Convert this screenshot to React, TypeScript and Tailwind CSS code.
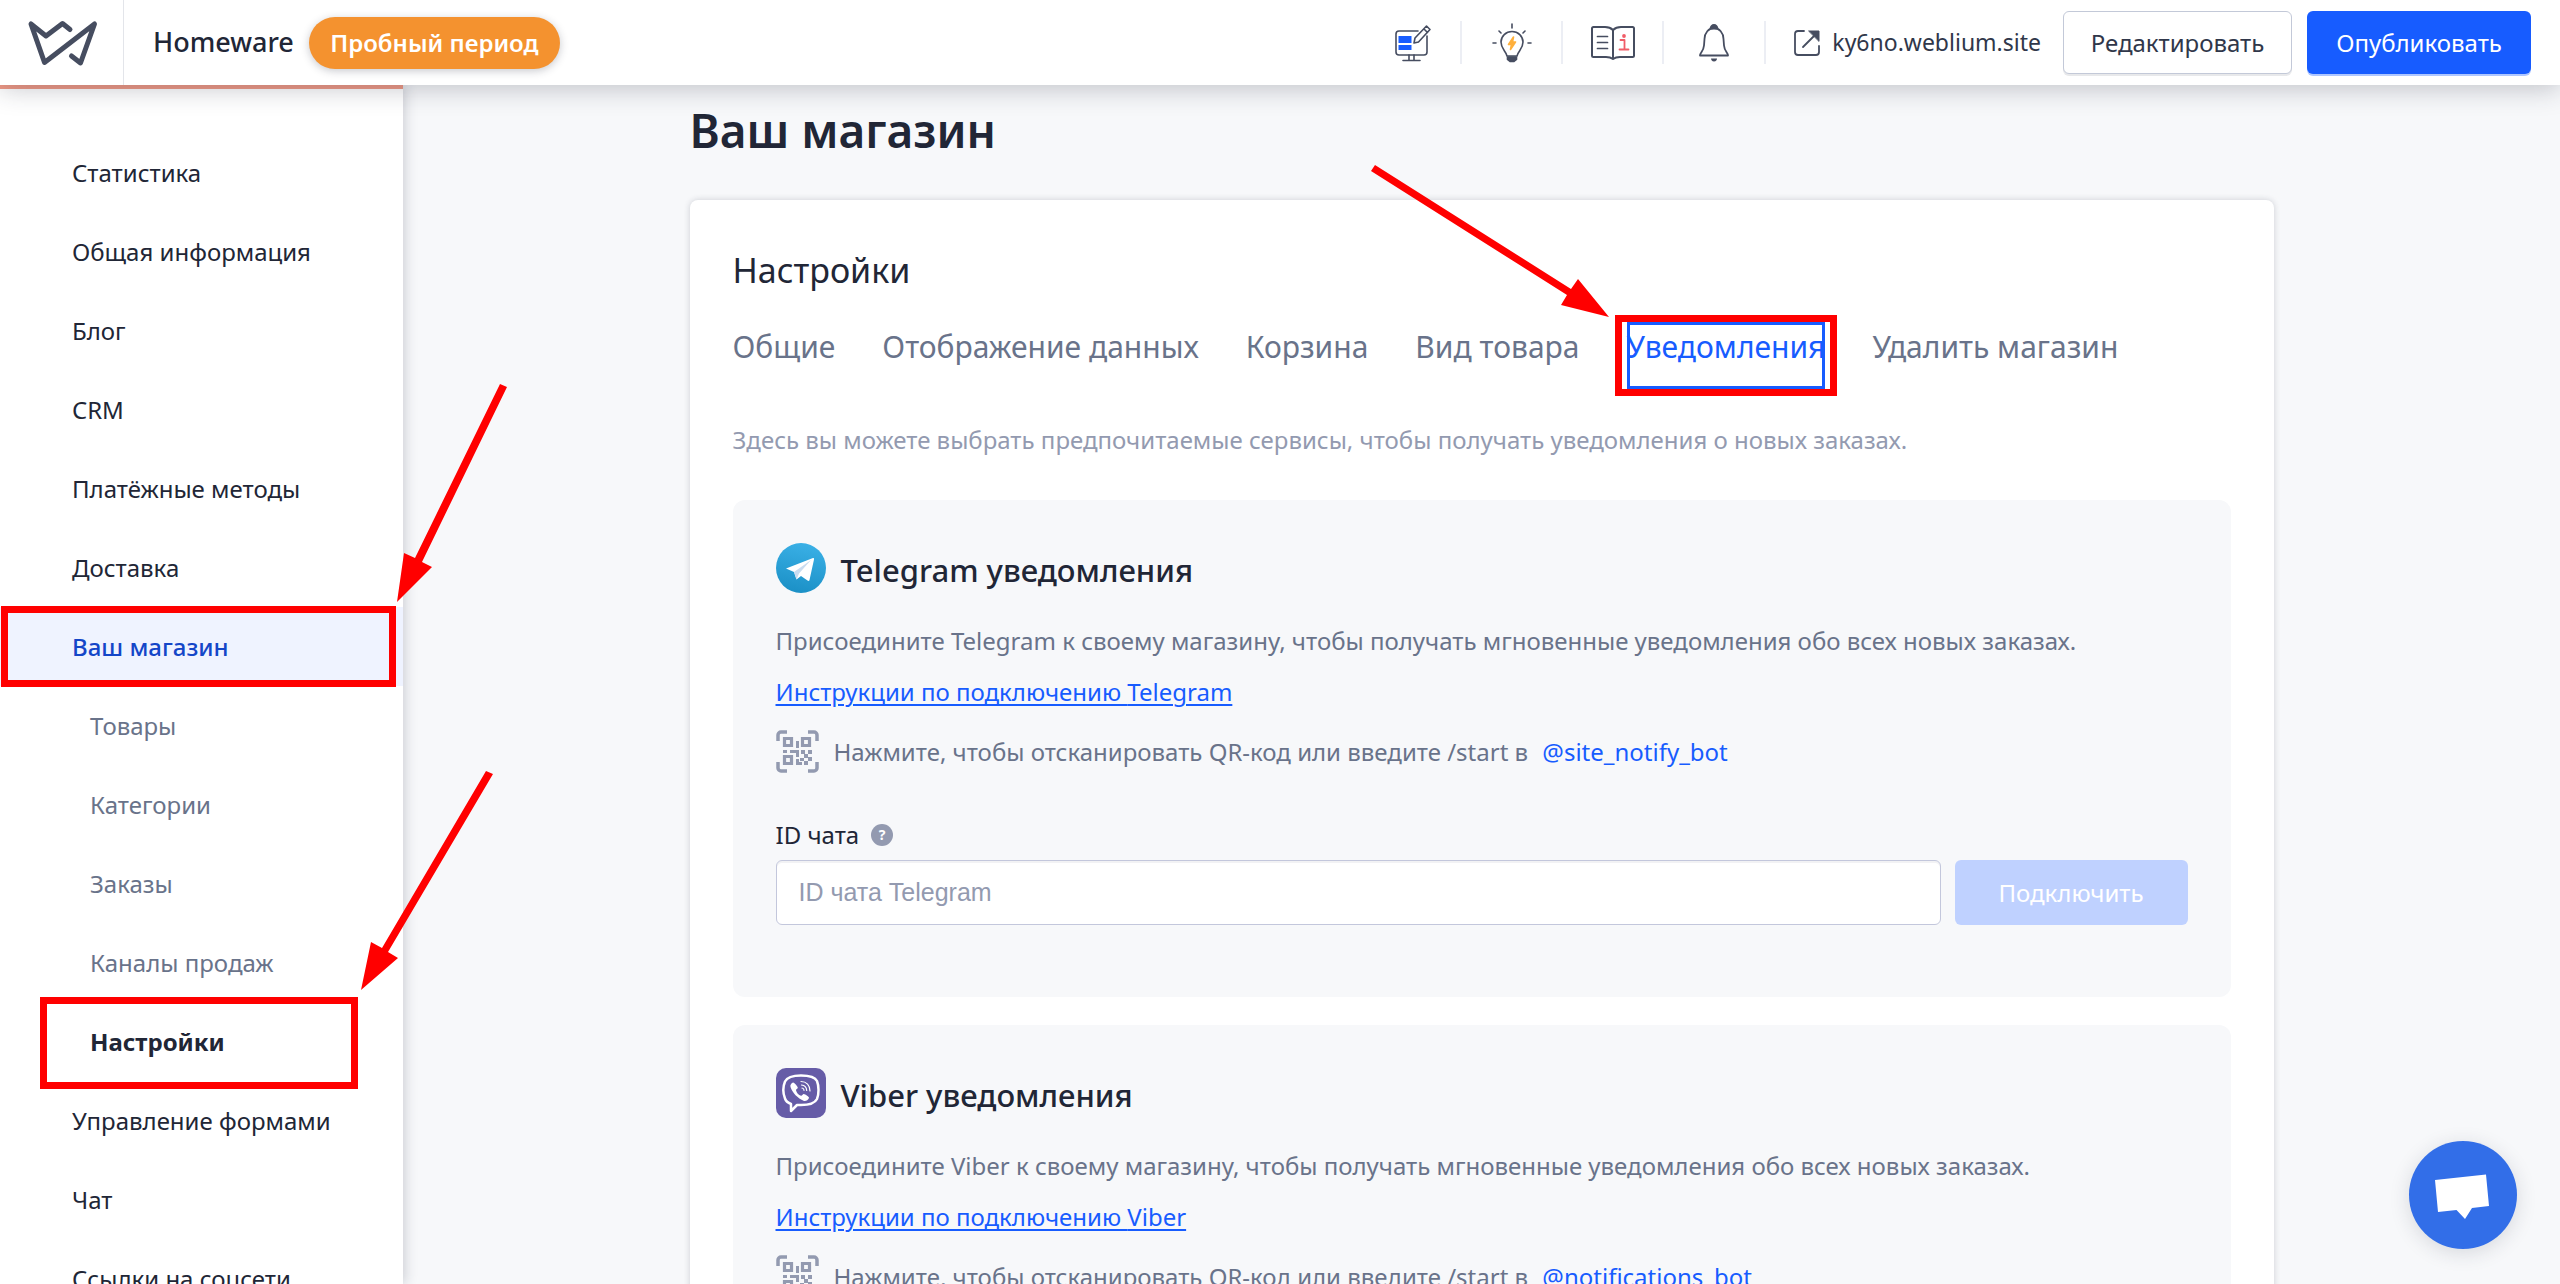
import type { ReactNode } from "react";
import { clsx } from "clsx";

type MenuItem = {
  label: string;
  sub?: boolean;
};

const MENU: MenuItem[] = [
  { label: "Статистика" },
  { label: "Общая информация" },
  { label: "Блог" },
  { label: "CRM" },
  { label: "Платёжные методы" },
  { label: "Доставка" },
  { label: "Ваш магазин" },
  { label: "Товары", sub: true },
  { label: "Категории", sub: true },
  { label: "Заказы", sub: true },
  { label: "Каналы продаж", sub: true },
  { label: "Настройки", sub: true },
  { label: "Управление формами" },
  { label: "Чат" },
  { label: "Ссылки на соцсети" },
];

const TABS = [
  "Общие",
  "Отображение данных",
  "Корзина",
  "Вид товара",
  "Уведомления",
  "Удалить магазин",
];

function Logo() {
  return (
    <svg className="h-12 w-[72px]" viewBox="26 18 72 48" fill="none">
      <path
        d="M70 28.5 62.5 22.5 46 35 31 23 44.5 61.5 94.5 23 80.5 62 71.5 55"
        stroke="#464d60"
        strokeWidth="5"
        strokeLinecap="round"
        strokeLinejoin="round"
      />
    </svg>
  );
}

function MonitorIcon() {
  return (
    <svg className="size-10" viewBox="0 0 40 40" fill="none" stroke="#464d60" strokeWidth="1.6" strokeLinecap="round" strokeLinejoin="round">
      <path d="M26 8H7a3 3 0 0 0-3 3v18a3 3 0 0 0 3 3h25a3 3 0 0 0 3-3V13" />
      <path d="M17 32v5M22 32v5M11 37.500h17" />
      <path d="M6.500 13h13v7h-13zM6.500 22h13v5h-13z" fill="#175cff" stroke="none" />
      <path d="m22 20 1-5L34.500 3 38 6.500 26.500 19zM32 6l3.500 3.500" fill="#fff" />
    </svg>
  );
}

function BulbIcon() {
  return (
    <svg className="size-10" viewBox="0 0 40 40" fill="none" stroke="#464d60" strokeWidth="1.6" strokeLinecap="round" strokeLinejoin="round">
      <path d="M20 1v4M7 8l2 2M33 8l-2 2M1 20h3M36 20h3" />
      <path d="M15 33c-1-5-6-7-6-14a11 10.500 0 0 1 22 0c0 7-5 9-6 14z" />
      <path d="M15.500 34h9v2.500l-2.500 2h-4l-2.500-2z" fill="#464d60" />
      <path d="m21.500 14-5 7.500h3l-1 5 5-7.500h-3z" fill="#ffb03b" stroke="#ffb03b" />
    </svg>
  );
}

function BookIcon() {
  return (
    <svg className="h-[34px] w-11" viewBox="0 0 44 34" fill="none" stroke="#464d60" strokeWidth="2" strokeLinecap="round" strokeLinejoin="round">
      <path d="M22 4c-2-2-5-3-8-3H2.500C1.500 1 1 1.500 1 2.500v27c0 1 .5 1.500 1.500 1.500H15c3 0 5 .5 7 2 2-1.500 4-2 7-2h12.500c1 0 1.500-.5 1.500-1.500v-27C43 1.500 42.500 1 41.500 1H30c-3 0-6 1-8 3zM22 4v28" />
      <path d="M6.500 10.500h10M6.500 16.500h10M6.500 22.500h10" strokeWidth="1.700" />
      <path d="M29.500 14h4v9M28.500 23.500h9" stroke="#f05d68" strokeWidth="1.800" />
      <circle cx="33" cy="10" r="1.900" fill="#f05d68" stroke="none" />
    </svg>
  );
}

function BellIcon() {
  return (
    <svg className="h-[38px] w-[30px]" viewBox="0 0 30 38" fill="none" stroke="#464d60" strokeWidth="1.800" strokeLinejoin="round">
      <path d="M1 31.500h28c0-3-3.500-4-4-10L24.500 15a9.500 11 0 0 0-19 0L5 21.500c-.5 6-4 7-4 10z" />
      <path d="M11.500 4.500a3.500 3.500 0 0 1 7 0z" fill="#464d60" />
      <path d="M12 34.500h6c0 1.500-1 3-3 3s-3-1.500-3-3z" fill="#464d60" stroke="none" />
    </svg>
  );
}

function ExternalIcon() {
  return (
    <svg className="size-[26px]" viewBox="0 0 26 26" fill="none" stroke="#464d60" strokeWidth="1.800" strokeLinecap="round">
      <path d="M10 1H4a3 3 0 0 0-3 3v18a3 3 0 0 0 3 3h18a3 3 0 0 0 3-3v-6M9 17 20 6" />
      <path d="M15 1h10v10z" fill="#464d60" stroke="#464d60" strokeWidth="1" />
    </svg>
  );
}

function TelegramIcon() {
  return (
    <svg className="size-[50px]" viewBox="0 0 50 50">
      <defs>
        <linearGradient id="tg" x1="0.600" y1="0" x2="0.400" y2="1">
          <stop offset="0" stopColor="#3ab0e6" />
          <stop offset="1" stopColor="#1b90c6" />
        </linearGradient>
      </defs>
      <circle cx="25" cy="25" r="25" fill="url(#tg)" />
      <path d="M10 25.500 37 15q1.500-.5 1 1.500L33.500 37q-.5 1.500-2 .5L25 33l-4.500 3.500L18 29z" fill="#fff" />
      <path d="m18 29 17-12-12 13.500-2.500 6z" fill="#c9dcf0" />
    </svg>
  );
}

function ViberIcon() {
  return (
    <svg className="size-[50px]" viewBox="0 0 50 50" fill="none" strokeLinecap="round">
      <rect width="50" height="50" rx="10" fill="#665ca7" />
      <path
        d="M25 7.500c-9 0-14 2-16 6-2 5-2 12 0 17 1 3 3.500 4.500 6 5.500V43l6-6h4c9 0 14-2 16-6 2-5 2-13 0-18-2-4-7-5.500-16-5.500z"
        stroke="#fff"
        strokeWidth="2.500"
        strokeLinejoin="round"
      />
      <path
        d="M17 14.500c-2 1-3 2.500-2.500 4.500 2 6 7 11 13.500 14 2 .5 4-1 5-3 .5-1-4.500-4.500-5.500-4-1 .3-1.500 2-2.500 1.700-2.500-.7-4.500-3-5-5.500-.2-1 1.700-1.500 1.800-2.500.1-1-3.500-5.500-4.800-5.200z"
        fill="#fff"
      />
      <path d="M25 13.500c5.500 0 9 4 9 9.500M25.500 17c3 .3 5 2.500 5.200 5.500M26 20c1.200.2 2 1 2 2.300" stroke="#fff" strokeWidth="1.200" />
    </svg>
  );
}

function QrIcon() {
  return (
    <svg className="size-[43px]" viewBox="0 0 43 43" fill="none" stroke="#939ab0">
      <path d="M2 11V5a3 3 0 0 1 3-3h6M32 2h6a3 3 0 0 1 3 3v6M41 32v6a3 3 0 0 1-3 3h-6M11 41H5a3 3 0 0 1-3-3v-6" strokeWidth="3.500" />
      <path d="M8.500 8.500h7v7h-7zM26.500 8.500h7v7h-7zM8.500 26.500h7v7h-7z" strokeWidth="3.200" />
      <path
        d="M20 11h3v7h-3zM7 20h4v3H7zM14 20h9v7h-3v-4h-6zM25 20h4v4h-4zM32 20h4v4h-4zM28 24h4v4h-4zM24 28h4v3h-4zM20 29h3v6h-3zM28 31h4v4h-4zM32 27h4v4h-4zM23 32h3v3h-3z"
        fill="#939ab0"
        stroke="none"
      />
    </svg>
  );
}

function RedFrame({ className }: { className: string }) {
  return (
    <span
      className={clsx(
        "pointer-events-none absolute border-[7px] border-[#ff0000]",
        className,
      )}
    />
  );
}

function Divider() {
  return <span className="h-[43px] w-0.5 bg-[#eceef4]" />;
}

function Header() {
  return (
    <header className="relative z-20 flex h-[85px] shrink-0 items-center bg-white pr-[29px] shadow-[0_4px_24px_rgba(34,40,60,0.25)]">
      <a
        href="#"
        aria-label="Weblium"
        className="flex h-full w-[124px] items-center border-r border-[#e3e5ea] pl-[26px]"
      >
        <Logo />
      </a>
      <span className="pl-[29px] text-[27px] font-medium text-[#212636]">
        Homeware
      </span>
      <button className="ml-[15px] h-[52px] w-[251px] rounded-full bg-[#f4922f] text-2xl font-semibold text-white shadow-[0_2px_8px_rgba(34,40,60,0.25)]">
        Пробный период
      </button>

      <nav className="ml-auto flex items-center">
        <button aria-label="Редактор" className="flex w-24 justify-center">
          <MonitorIcon />
        </button>
        <Divider />
        <button aria-label="Идеи" className="flex w-[99px] justify-center">
          <BulbIcon />
        </button>
        <Divider />
        <button aria-label="Справка" className="flex w-[99px] justify-center">
          <BookIcon />
        </button>
        <Divider />
        <button aria-label="Оповещения" className="flex w-[100px] justify-center">
          <BellIcon />
        </button>
        <Divider />
      </nav>
      <a
        href="#"
        className="ml-7 flex items-center gap-3 text-[23px] text-[#30374a]"
      >
        <ExternalIcon />
        ky6no.weblium.site
      </a>
      <button className="ml-[22px] h-[63px] w-[229px] rounded-md border border-[#c3c9d8] bg-white text-2xl text-[#30374a] shadow-[0_2px_0_rgba(34,40,60,0.1)]">
        Редактировать
      </button>
      <button className="ml-[15px] h-[63px] w-56 rounded-md bg-[#175cff] text-2xl text-white shadow-[0_2px_0_rgba(23,92,255,0.35)]">
        Опубликовать
      </button>
    </header>
  );
}

function itemColors(label: string, sub?: boolean) {
  if (label === "Ваш магазин") return "bg-[#eff3ff] font-medium text-[#1446c8]";
  if (label === "Настройки") return "font-bold text-[#212636]";
  return sub ? "text-[#69738a]" : "text-[#212636]";
}

function Sidebar() {
  return (
    <aside className="relative z-10 w-[403px] shrink-0 border-t-4 border-[#f09a86] bg-white pt-11 shadow-[2px_0_12px_rgba(34,40,60,0.2)]">
      <ul>
        {MENU.map(({ label, sub }) => (
          <li key={label} className="relative">
            <a
              href="#"
              className={clsx(
                "flex h-[79px] items-center text-2xl",
                sub ? "pl-[90px]" : "pl-[72px]",
                itemColors(label, sub),
              )}
            >
              {label}
            </a>
            {label === "Ваш магазин" && (
              <>
                <RedFrame className="-inset-y-px right-[7px] left-px" />
                <svg
                  className="pointer-events-none absolute -top-[223px] left-[397px] h-[218px] w-[110px]"
                  viewBox="0 0 110 218"
                  fill="#f00"
                >
                  <path d="M0 218 7 169 18 174 103 0 110 3 25 178 35 183z" />
                </svg>
              </>
            )}
            {label === "Настройки" && (
              <>
                <RedFrame className="-top-[5px] right-[45px] -bottom-2 left-10" />
                <svg
                  className="pointer-events-none absolute -top-[231px] left-[361px] h-[219px] w-[132px]"
                  viewBox="0 0 132 219"
                  fill="#f00"
                >
                  <path d="M0 219 10 171 21 177 125 0 132 3 27 181 37 187z" />
                </svg>
              </>
            )}
          </li>
        ))}
      </ul>
    </aside>
  );
}

function Tabs() {
  return (
    <div role="tablist" className="flex gap-[47px]">
      {TABS.map((tab) => {
        const active = tab === "Уведомления";
        return (
          <button
            key={tab}
            role="tab"
            aria-selected={active}
            className={clsx(
              "relative h-[67px] pb-[18px] text-3xl leading-[44px] whitespace-nowrap",
              active
                ? "text-[#175cff] ring-[3px] ring-[#175cff] ring-inset"
                : "text-[#69738a]",
            )}
          >
            {tab}
            {active && (
              <>
                <RedFrame className="-inset-x-3 -inset-y-[7px]" />
                <svg
                  className="pointer-events-none absolute -top-[157px] -left-[256px] h-[152px] w-[238px]"
                  viewBox="0 0 238 152"
                  fill="#f00"
                >
                  <path d="M238 152 190 140 196 130 0 6 4 0 200 124 207 114z" />
                </svg>
              </>
            )}
          </button>
        );
      })}
    </div>
  );
}

type ServiceProps = {
  name: string;
  bot: string;
  icon: ReactNode;
};

function Service({ name, bot, icon }: ServiceProps) {
  const inputId = `chat-${name}`;
  return (
    <section className="h-[497px] shrink-0 rounded-xl bg-[#f7f8fa] px-[43px] pt-[43px] text-2xl text-[#69738a]">
      <div className="flex items-center gap-[15px]">
        {icon}
        <h3 className="pt-1 text-[31px] leading-[46px] font-medium text-[#212636]">
          {name} уведомления
        </h3>
      </div>
      <p className="mt-[30px] leading-9">
        Присоедините {name} к своему магазину, чтобы получать мгновенные
        уведомления обо всех новых заказах.
      </p>
      <a
        href="#"
        className="mt-[15px] inline-block leading-9 text-[#175cff] underline decoration-2 underline-offset-3"
      >
        Инструкции по подключению {name}
      </a>
      <div className="mt-5 flex items-center gap-[15px]">
        <QrIcon />
        <p>
          Нажмите, чтобы отсканировать QR-код или введите /start в{" "}
          <a href="#" className="ml-2 text-[#175cff]">
            {bot}
          </a>
        </p>
      </div>
      <div className="mt-11 flex items-center gap-3">
        <label htmlFor={inputId} className="leading-9 text-[#212636]">
          ID чата
        </label>
        <span className="flex size-[22px] items-center justify-center rounded-full bg-[#939ab0] text-sm font-bold text-white">
          ?
        </span>
      </div>
      <div className="mt-[7px] flex gap-[14px]">
        <input
          id={inputId}
          placeholder={`ID чата ${name}`}
          className="h-[65px] min-w-0 flex-1 rounded-md border border-[#c3c7dc] bg-white px-[22px] font-['Liberation_Sans',Arial,sans-serif] text-[25px] shadow-[inset_0_2px_0_rgba(34,40,60,0.06)] placeholder:text-[#939ab0]"
        />
        <button
          disabled
          className="h-[65px] w-[233px] rounded-md bg-[#bfd1ff] text-2xl text-white"
        >
          Подключить
        </button>
      </div>
    </section>
  );
}

export default function App() {
  return (
    <div className="flex h-screen flex-col overflow-hidden bg-[#f7f8fa] font-['Noto_Sans','Open_Sans',sans-serif]">
      <Header />
      <div className="flex min-h-0 flex-1">
        <Sidebar />
        <main className="min-w-0 flex-1">
          <div className="mx-auto max-w-[1584px]">
            <h1 className="pt-3 text-[46px] leading-[66px] font-semibold text-[#212636]">
              Ваш магазин
            </h1>
            <div className="mt-[37px] flex flex-col rounded-lg bg-white px-[43px] pt-11 pb-11 shadow-[0_0_6px_rgba(34,40,60,0.2)]">
              <h2 className="text-[34px] leading-[52px] text-[#212636]">
                Настройки
              </h2>
              <div className="mt-[26px]">
                <Tabs />
              </div>
              <p className="mt-[33px] text-2xl leading-9 text-[#939ab0]">
                Здесь вы можете выбрать предпочитаемые сервисы, чтобы получать
                уведомления о новых заказах.
              </p>
              <div className="mt-[42px] flex flex-col gap-7">
                <Service
                  name="Telegram"
                  bot="@site_notify_bot"
                  icon={<TelegramIcon />}
                />
                <Service
                  name="Viber"
                  bot="@notifications_bot"
                  icon={<ViberIcon />}
                />
              </div>
            </div>
          </div>
        </main>
      </div>

      <button
        aria-label="Открыть чат"
        className="fixed right-[43px] bottom-[35px] z-30 size-[108px] rounded-full bg-[#326ee8] shadow-[0_4px_20px_rgba(34,40,60,0.15)]"
      >
        <svg viewBox="0 0 108 108">
          <path d="M26 39 77 33.500 80 65 63 67 56 78 47.500 69 29 71z" fill="#fff" />
        </svg>
      </button>
    </div>
  );
}
